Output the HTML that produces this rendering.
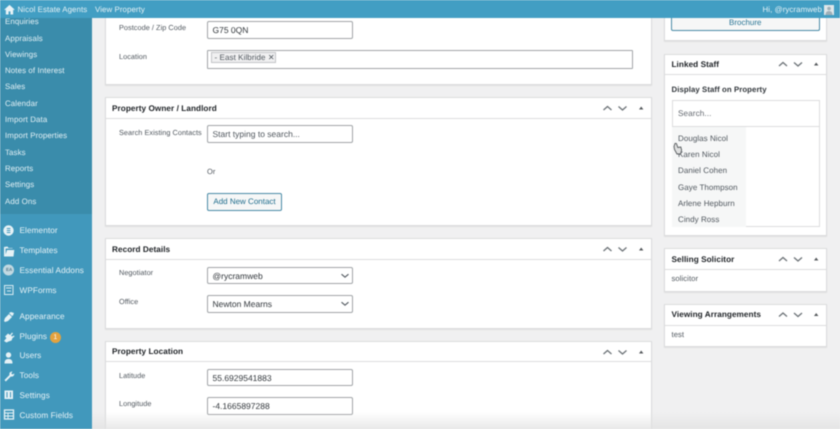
<!DOCTYPE html>
<html><head><meta charset="utf-8">
<style>
html,body{margin:0;padding:0;width:840px;height:429px;overflow:hidden;background:#f0f0f1}
#r{position:relative;width:840px;height:429px;overflow:hidden;font-family:"Liberation Sans",sans-serif;filter:blur(.45px);background:#f0f0f1;text-rendering:geometricPrecision}
#r div,#r span.a,#r svg{position:absolute}
.t{white-space:nowrap;line-height:12px}
.s{font-size:7.9px;color:#e4f1f6;left:5px;letter-spacing:.1px}
.m{font-size:8.2px;color:#e8f3f7;left:19.5px;letter-spacing:.1px}
.p{background:#fff;border:1px solid #dbdcdd;box-sizing:border-box;box-shadow:0 1px 1px rgba(0,0,0,.07)}
.hl{height:1px;background:#dcdcde}
.h{font-size:8.2px;font-weight:bold;color:#1d2125;letter-spacing:.06px}
.l{font-size:7.3px;color:#50575e;left:119px;letter-spacing:.05px}
.i{background:#fff;border:1px solid #a2a5a8;border-radius:2px;box-sizing:border-box;left:207px;width:146px;height:17.5px;font-size:8.5px;color:#32373c;line-height:16px;padding-left:4.5px;white-space:nowrap}
.st{font-size:8px;color:#50575e;left:678px;letter-spacing:.05px}
</style></head><body><div id="r">

<!-- sidebar -->
<div style="left:0;top:0;width:91.5px;height:215px;background:#3a8cab"></div>
<div style="left:0;top:214px;width:91.5px;height:215px;background:#4198bc"></div>
<div class="t s" style="top:16px">Enquiries</div>
<div class="t s" style="top:32.5px">Appraisals</div>
<div class="t s" style="top:48.5px">Viewings</div>
<div class="t s" style="top:65px">Notes of Interest</div>
<div class="t s" style="top:81px">Sales</div>
<div class="t s" style="top:97.5px">Calendar</div>
<div class="t s" style="top:114px">Import Data</div>
<div class="t s" style="top:130px">Import Properties</div>
<div class="t s" style="top:146.5px">Tasks</div>
<div class="t s" style="top:163px">Reports</div>
<div class="t s" style="top:179px">Settings</div>
<div class="t s" style="top:195.5px">Add Ons</div>

<div class="t m" style="top:224.5px">Elementor</div>
<div class="t m" style="top:244.5px">Templates</div>
<div class="t m" style="top:264.5px">Essential Addons</div>
<div class="t m" style="top:284.5px">WPForms</div>
<div class="t m" style="top:310.5px">Appearance</div>
<div class="t m" style="top:330.5px">Plugins</div>
<div class="t m" style="top:350px">Users</div>
<div class="t m" style="top:370px">Tools</div>
<div class="t m" style="top:390px">Settings</div>
<div class="t m" style="top:409.5px">Custom Fields</div>

<svg style="left:0;top:220px" width="20" height="209" viewBox="0 0 20 209" fill="#e6f2f6">
<circle cx="8.5" cy="10.5" r="5.2"/><path d="M6.8 8.5h3.6M6.8 10.5h3.6M6.8 12.5h3.6" stroke="#4198bc" stroke-width="1"/>
<path d="M4 27v9.5h9.5l.8-6.5H7l-1.4 4.5V28.5h7V28H8.5l-1-1.5z"/>
<circle cx="8.5" cy="50" r="5.5" fill="#c2d9e2"/>
<rect x="4.5" y="65.5" width="8.5" height="9" fill="none" stroke="#d8ebf2" stroke-width="1"/><path d="M6 68h5.5M7 71h4" stroke="#d8ebf2" stroke-width="1"/>
<path d="M4 101l1-3 4-4 3 3-4 4-3 1zM9 93l2-1 3 1-1 2.500-1 .5z"/>
<path d="M4 121l2.500-3-1.500-1.500 3-3 2 1.500 2-2.500 1 1-2 2 1 1 2-1 .5 1-2 1.500-1 2.500-3 1-2 1z"/>
<circle cx="8.500" cy="135" r="2.700"/><path d="M4.500 143.500c0-3.500 1.500-4.500 4-4.500s4 1 4 4.500z"/>
<path d="M4.500 160l5-5c-.5-2 .5-3.500 3-3.500l-1.200 2 1 1 2-1c0 2.500-1.700 3.500-3.500 3l-5 5z"/>
<rect x="4.500" y="170.500" width="8.500" height="8.500"/><path d="M7 172v5.500M10.500 172v5.500" stroke="#4198bc" stroke-width="1"/>
<rect x="4.500" y="190" width="9" height="9" fill="none" stroke="#e6f2f6" stroke-width="1.300"/><path d="M4.500 193h9M4.500 196h9M8 193v6" stroke="#e6f2f6" stroke-width=".9"/>
</svg>
<div style="left:6px;top:267px;width:5px;text-align:center;font-size:4.500px;line-height:6px;color:#5b7f90;font-weight:bold">EA</div>
<div style="left:49.800px;top:332px;width:11px;height:11px;border-radius:50%;background:#e3a23f;color:#fff;font-size:7px;line-height:11px;text-align:center">1</div>

<!-- top bar -->
<div style="left:0;top:0;width:840px;height:18px;background:#429ec3"></div>
<svg style="left:4px;top:4px" width="11" height="11" viewBox="0 0 11 12" fill="#e8f3f7"><path d="M5.500 1L0 6l.6.8L1.500 6v5.500h3V8h2v3.500h3V6l.9.8.6-.8z"/></svg>
<div class="t" style="left:17.500px;top:3.500px;font-size:7.900px;color:#e6f2f6;letter-spacing:.07px">Nicol Estate Agents</div>
<div class="t" style="left:95px;top:3.500px;font-size:7.900px;color:#e6f2f6;letter-spacing:.07px">View Property</div>
<div class="t" style="left:762.500px;top:3.500px;font-size:7.900px;color:#e6f2f6;letter-spacing:.07px">Hi, @rycramweb</div>
<div style="left:824px;top:5px;width:10px;height:10px;background:#dfe7ea"></div>
<svg style="left:824px;top:5px" width="10" height="10" viewBox="0 0 10 10" fill="#9fb0b8"><circle cx="5" cy="3.500" r="1.800"/><path d="M1.500 10c0-3 1.500-4 3.500-4s3.500 1 3.500 4z"/></svg>

<!-- panel 1 -->
<div class="p" style="left:104.500px;top:18px;width:547px;height:67px;border-top:0"></div>
<div class="t l" style="top:21.500px">Postcode / Zip Code</div>
<div class="i" style="top:21px">G75 0QN</div>
<div class="t l" style="top:50.500px">Location</div>
<div style="left:207px;top:49.500px;width:426px;height:19.500px;background:#fff;border:1px solid #a2a5a8;box-sizing:border-box;border-radius:1px"></div>
<div class="t" style="left:210.500px;top:51.500px;height:11.500px;width:65.500px;background:#f0f0f1;border:.6px solid #c3c4c7;box-sizing:border-box;font-size:8px;color:#50575e;line-height:10.500px;padding-left:3px;letter-spacing:.08px">- East Kilbride <span style="font-size:8px;color:#50575e">✕</span></div>

<!-- panel 2 -->
<div class="p" style="left:104.500px;top:96.500px;width:547px;height:129px"></div>
<div class="hl" style="left:105px;top:118px;width:546px"></div>
<div class="t h" style="left:112px;top:102.500px">Property Owner / Landlord</div>
<div class="t l" style="top:127px">Search Existing Contacts</div>
<div class="i" style="top:125px;color:#50575e">Start typing to search...</div>
<div class="t" style="left:207px;top:166px;font-size:7.500px;color:#50575e">Or</div>
<div style="left:207px;top:193px;width:75px;height:17.500px;background:#f6f7f7;border:1px solid #4a8ba7;border-radius:2px;box-sizing:border-box;font-size:8px;color:#1f6c8c;text-align:center;line-height:15.500px;white-space:nowrap">Add New Contact</div>

<!-- panel 3 -->
<div class="p" style="left:104.500px;top:238px;width:547px;height:91px"></div>
<div class="hl" style="left:105px;top:259px;width:546px"></div>
<div class="t h" style="left:112px;top:243.500px">Record Details</div>
<div class="t l" style="top:267px">Negotiator</div>
<div class="i" style="top:266.500px">@rycramweb</div>
<div class="t l" style="top:296px">Office</div>
<div class="i" style="top:295px">Newton Mearns</div>
<svg style="left:340px;top:273px" width="10" height="6" viewBox="0 0 10 6" fill="none" stroke="#50575e" stroke-width="1.100"><path d="M1.500 1.200l3.500 3 3.500-3"/></svg>
<svg style="left:340px;top:301px" width="10" height="6" viewBox="0 0 10 6" fill="none" stroke="#50575e" stroke-width="1.100"><path d="M1.500 1.200l3.500 3 3.500-3"/></svg>

<!-- panel 4 -->
<div class="p" style="left:104.500px;top:340.500px;width:547px;height:100px"></div>
<div class="hl" style="left:105px;top:361px;width:546px"></div>
<div class="t h" style="left:112px;top:346px">Property Location</div>
<div class="t l" style="top:369.500px">Latitude</div>
<div class="i" style="top:368.500px">55.6929541883</div>
<div class="t l" style="top:398px">Longitude</div>
<div class="i" style="top:397px">-4.1665897288</div>

<!-- right: brochure panel -->
<div class="p" style="left:664px;top:18px;width:163px;height:23px;border-top:0"></div>
<div style="left:671px;top:18px;width:148.500px;height:12.500px;background:#f6f7f7;border:1px solid #4a8ba7;border-top:0;border-radius:0 0 2px 2px;box-sizing:border-box;font-size:8px;color:#2a7595;text-align:center;line-height:9px">Brochure</div>

<!-- linked staff -->
<div class="p" style="left:664px;top:53.500px;width:163px;height:182px"></div>
<div class="hl" style="left:665px;top:74px;width:161px"></div>
<div class="t h" style="left:671.500px;top:58.500px">Linked Staff</div>
<div class="t" style="left:671.500px;top:83.500px;font-size:7.800px;font-weight:bold;color:#32373c;letter-spacing:.08px">Display Staff on Property</div>
<div style="left:671.500px;top:100px;width:148px;height:127px;border:1px solid #dcdcde;box-sizing:border-box;background:#fff"></div>
<div style="left:672px;top:126px;width:147px;height:1px;background:#dcdcde"></div>
<div style="left:672px;top:127px;width:73.500px;height:99.500px;background:#f6f7f7"></div>
<div class="t" style="left:678px;top:108px;font-size:8.200px;color:#646970;letter-spacing:.08px">Search...</div>
<div class="t st" style="top:132.500px">Douglas Nicol</div>
<div class="t st" style="top:149px">Karen Nicol</div>
<div class="t st" style="top:165px">Daniel Cohen</div>
<div class="t st" style="top:181.500px">Gaye Thompson</div>
<div class="t st" style="top:198px">Arlene Hepburn</div>
<div class="t st" style="top:214px">Cindy Ross</div>
<svg style="left:672.500px;top:142px" width="10" height="14" viewBox="0 0 10 14"><path d="M2 1.500c1-.5 1.500 0 1.800 1l1 3 3-.5.8 3-1 4H4L1.500 7.500 1 4.500z" fill="#dfe0e0" stroke="#55595c" stroke-width=".9"/></svg>

<!-- selling solicitor -->
<div class="p" style="left:664px;top:248px;width:163px;height:44px"></div>
<div class="hl" style="left:665px;top:269px;width:161px"></div>
<div class="t h" style="left:671.500px;top:253.500px">Selling Solicitor</div>
<div class="t" style="left:671.500px;top:273px;font-size:7.700px;color:#50575e;letter-spacing:.06px">solicitor</div>

<!-- viewing arrangements -->
<div class="p" style="left:664px;top:303.500px;width:163px;height:43.500px"></div>
<div class="hl" style="left:665px;top:325px;width:161px"></div>
<div class="t h" style="left:671.500px;top:309px">Viewing Arrangements</div>
<div class="t" style="left:671.500px;top:328.500px;font-size:7.700px;color:#50575e;letter-spacing:.06px">test</div>

<!-- metabox handle icons -->
<svg style="left:0;top:0" width="840" height="429" viewBox="0 0 840 429" fill="none" stroke="#6d7378" stroke-width="1.300">
<path d="M603.500 110l4-3.500 4 3.500M618.500 106.500l4 3.500 4-3.500"/>
<path d="M603.500 251l4-3.500 4 3.500M618.500 247.500l4 3.500 4-3.500"/>
<path d="M603.500 354l4-3.500 4 3.500M618.500 350.500l4 3.500 4-3.500"/>
<path d="M779 66l4-3.500 4 3.500M794 62.500l4 3.500 4-3.500"/>
<path d="M779 261l4-3.500 4 3.500M794 257.500l4 3.500 4-3.500"/>
<path d="M779 316.500l4-3.500 4 3.500M794 313l4 3.500 4-3.500"/>
<g fill="#55595c" stroke="none">
<path d="M639 109.500l2.200-3 2.200 3z"/>
<path d="M639 250.500l2.200-3 2.200 3z"/>
<path d="M639 353.500l2.200-3 2.200 3z"/>
<path d="M814 65.500l2.200-3 2.200 3z"/>
<path d="M814 260.500l2.200-3 2.200 3z"/>
<path d="M814 316l2.200-3 2.200 3z"/>
</g>
</svg>

<!-- bottom fade -->
<div style="left:91.500px;top:412px;width:748.500px;height:17px;background:linear-gradient(to bottom,rgba(235,235,235,0),rgba(225,225,225,.75))"></div>
</div></body></html>
